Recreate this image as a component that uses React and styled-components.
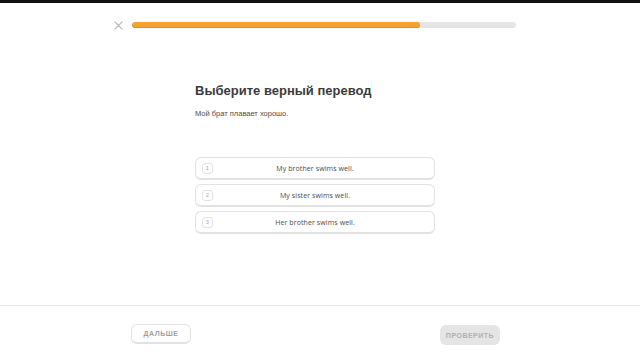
import styled, { createGlobalStyle } from 'styled-components';

const GlobalStyle = createGlobalStyle`
    html, body {
        margin: 0;
        padding: 0;
        background: #fff;
        font-family: "Liberation Sans", Arial, sans-serif;
    }
`;

const Page = styled.div`
    display: flex;
    flex-direction: column;
    width: 640px;
    height: 360px;
    overflow: hidden;
    background: #fff;
`;

const TopStrip = styled.div`
    height: 3px;
    background: #111;
`;

const Header = styled.div`
    display: flex;
    align-items: center;
    gap: 9px;
    margin-top: 19px;
    padding: 0 124px 0 113px;
    height: 6px;
`;

const CloseButton = styled.button`
    display: flex;
    align-items: center;
    justify-content: center;
    width: 10px;
    height: 10px;
    padding: 0;
    border: none;
    background: none;
    color: #b5b5b5;
`;

const Track = styled.div`
    flex: 1;
    height: 6px;
    border-radius: 3px;
    background: #e5e5e5;
    overflow: hidden;
`;

const Fill = styled.div`
    height: 100%;
    border-radius: 3px;
    background: #f5a232;
    box-shadow: inset 0 -1px 0 #ea8d1e;
`;

const Main = styled.main`
    display: flex;
    flex-direction: column;
    width: 240px;
    margin: 54px 0 0 195px;
`;

const Title = styled.h1`
    margin: 0;
    font-size: 13px;
    line-height: 18px;
    font-weight: bold;
    color: #3c3c3c;
`;

const Prompt = styled.p`
    margin: 8px 0 0;
    font-size: 7.5px;
    line-height: 12px;
    color: #4b4b4b;
`;

const Choices = styled.div`
    display: flex;
    flex-direction: column;
    gap: 4px;
    margin-top: 37px;
`;

const Choice = styled.div`
    display: flex;
    align-items: center;
    height: 23px;
    padding: 0 6px;
    box-sizing: border-box;
    border: 1px solid #e2e2e2;
    border-bottom-width: 2px;
    border-radius: 6px;
    background: #fff;
`;

const Badge = styled.span`
    display: flex;
    align-items: center;
    justify-content: center;
    width: 11px;
    height: 11px;
    box-sizing: border-box;
    border: 1px solid #e2e2e2;
    border-radius: 3px;
    font-size: 5px;
    color: #9a9a9a;
`;

const ChoiceText = styled.span`
    flex: 1;
    text-align: center;
    padding-right: 11px;
    font-family: "Open Sans", "Liberation Sans", sans-serif;
    font-size: 7px;
    letter-spacing: 0.1px;
    color: #4b4b4b;
`;

const Footer = styled.footer`
    display: flex;
    justify-content: space-between;
    align-items: flex-start;
    margin-top: auto;
    height: 55px;
    box-sizing: border-box;
    padding: 18px 140px 0 131px;
    border-top: 1px solid #e5e5e5;
`;

const Button = styled.button`
    width: ${p => p.$width}px;
    height: 20px;
    margin-top: ${p => p.$offset || 0}px;
    box-sizing: border-box;
    border-radius: 6px;
    border: ${p => (p.$filled ? 'none' : '1px solid #e2e2e2')};
    border-bottom: ${p => (p.$filled ? 'none' : '2px solid #e2e2e2')};
    background: ${p => (p.$filled ? '#e5e5e5' : '#fff')};
    color: ${p => (p.$filled ? '#b0b0b0' : '#a0a0a0')};
    font-family: "Liberation Sans", Arial, sans-serif;
    font-size: 7px;
    font-weight: bold;
    letter-spacing: 0.5px;
    padding: 0;
`;

const options = ['My brother swims well.', 'My sister swims well.', 'Her brother swims well.'];

const App = () => {
    return (
        <Page>
            <GlobalStyle />
            <TopStrip />
            <Header>
                <CloseButton>
                    <svg width="9" height="9" viewBox="0 0 10 10">
                        <path d="M1 1 L9 9 M9 1 L1 9" stroke="currentColor" strokeWidth="1.3" strokeLinecap="round" />
                    </svg>
                </CloseButton>
                <Track>
                    <Fill style={{ width: `${(289 / 385) * 100}%` }} />
                </Track>
            </Header>
            <Main>
                <Title>Выберите верный перевод</Title>
                <Prompt>Мой брат плавает хорошо.</Prompt>
                <Choices>
                    {options.map((text, idx) => (
                        <Choice key={idx}>
                            <Badge>{idx + 1}</Badge>
                            <ChoiceText>{text}</ChoiceText>
                        </Choice>
                    ))}
                </Choices>
            </Main>
            <Footer>
                <Button $width={60}>ДАЛЬШЕ</Button>
                <Button $width={60} $filled $offset={1}>ПРОВЕРИТЬ</Button>
            </Footer>
        </Page>
    );
};

export default App;
